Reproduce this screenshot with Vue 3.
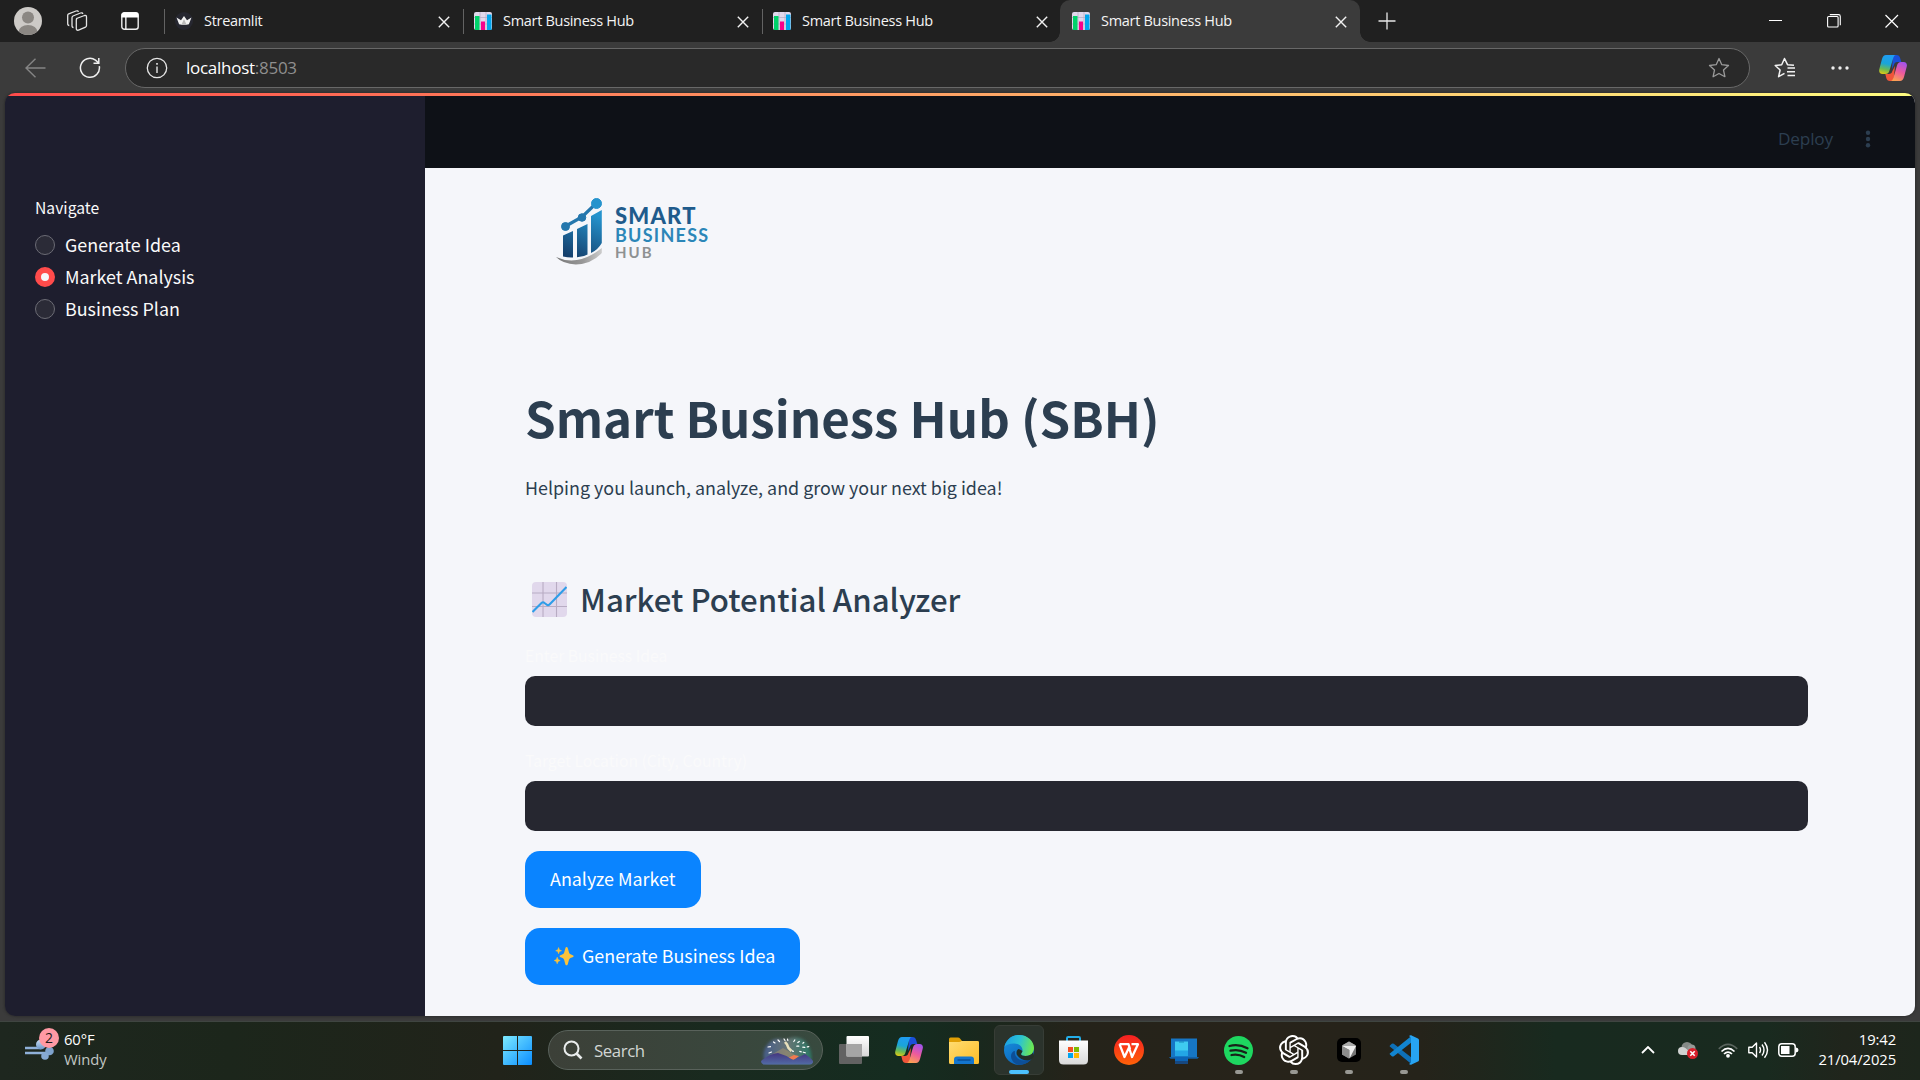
<script setup>
import { ref } from 'vue'

const tabs = [
  { title: 'Streamlit', icon: 'crown', active: false },
  { title: 'Smart Business Hub', icon: 'chart', active: false },
  { title: 'Smart Business Hub', icon: 'chart', active: false },
  { title: 'Smart Business Hub', icon: 'chart', active: true },
]
const pages = ['Generate Idea', 'Market Analysis', 'Business Plan']
const page = ref('Market Analysis')
const idea = ref('')
const place = ref('')
</script>

<template>
  <div class="screen">
    <svg class="defs" width="0" height="0" aria-hidden="true">
      <defs>
        <linearGradient id="cpA" x1="0.2" y1="0" x2="0" y2="1">
          <stop offset="0" stop-color="#1f9df0" /><stop offset=".4" stop-color="#1aa5d8" /><stop offset=".7" stop-color="#6cba52" /><stop offset="1" stop-color="#f3cb0a" />
        </linearGradient>
        <linearGradient id="cpB" x1=".7" y1="0" x2=".3" y2="1">
          <stop offset="0" stop-color="#a353ea" /><stop offset=".5" stop-color="#ee5a9c" /><stop offset="1" stop-color="#fba351" />
        </linearGradient>
        <symbol id="copilot" viewBox="0 0 28 26">
          <path d="M14 0h3.500c2 0 3 1 3.600 3l1.200 4h-4c-2 0-2.800 1-3.300 2.700L13 14z" fill="#1a4fd8" />
          <path d="M14.500 26h-3.600c-2 0-3-1-3.600-3l-1-4h3.500c2 0 3-1 3.500-2.700L16 11z" fill="#f0553a" />
          <path d="M7 0h10c-1.600.2-2.300 1.500-2.900 3.500l-3.700 12.200C9.700 18 8.600 19 6.300 19H3.500C.8 19-.3 17 .3 14.200L3 4C3.800 1.300 5 0 7 0z" fill="url(#cpA)" />
          <path d="M21 26H11.500c1.600-.2 2.400-1.500 3-3.500l3.500-12C18.700 8.200 19.800 7 22 7h2.700c2.600 0 3.700 2 3 4.800L25 22c-.8 2.800-2 4-4 4z" fill="url(#cpB)" />
        </symbol>
      </defs>
    </svg>

    <header class="tabstrip">
      <svg class="avatar" width="28" height="28" viewBox="0 0 28 28">
        <clipPath id="av"><circle cx="14" cy="14" r="14" /></clipPath>
        <g clip-path="url(#av)"><rect width="28" height="28" fill="#cdcac7" /><circle cx="14" cy="10.500" r="6" fill="#8b8783" /><ellipse cx="14" cy="25" rx="9.500" ry="7" fill="#8b8783" /></g>
      </svg>
      <svg class="spaces" width="22" height="22" viewBox="0 0 22 22" fill="none" stroke="#e4e4e4" stroke-width="1.300" stroke-linejoin="round">
        <path d="M10.500 8.500 18.500 5.500q2-.5 2 1.500v8.500q0 1.200-1 1.600l-7 3q-2.200.6-2.200-1.600V10q0-1 .7-1.500z" />
        <path d="M7.500 17.500q-1.500 0-1.500-1.700V7.700q0-1.200 1-1.700l7.500-3q2-.6 2.300 1" />
        <path d="M3.300 15.500q-1.600 0-1.600-1.700V5.500q0-1.200 1-1.600L10 1q2-.7 2.400.8" />
      </svg>
      <svg class="vert" width="18" height="18" viewBox="0 0 18 18"><rect x=".8" y=".8" width="16.400" height="16.400" rx="2.500" fill="none" stroke="#eee" stroke-width="1.400" /><path d="M.5 5.500V3Q.5.500 3 .5h12q2.500 0 2.500 2.500v2.500zM4.200 5h1.300v12H4.200z" fill="#fff" /></svg>
      <nav class="tabs">
        <div v-for="(t, i) in tabs" :key="i" class="tab" :class="{ active: t.active }">
          <svg v-if="t.icon === 'crown'" class="fav" width="18" height="18" viewBox="0 0 18 18"><circle cx="9" cy="9" r="9" fill="#262730" /><path d="M1.500 5.500 6 8.200 9 4l3 4.200 4.500-2.700-2.600 6.800q-4.900 1-9.800 0z" fill="#f2f2f2" /><path d="m9 7 2.500 5.500h-5z" fill="#bbb" /></svg>
          <svg v-else class="fav" width="18" height="18" viewBox="0 0 18 18"><rect width="18" height="18" rx="2" fill="#e1d8ec" /><path d="M0 5.500h18M0 12h18M6 0v18M12 0v18" stroke="#b9aec8" stroke-width=".8" /><path d="M1 4h4.500v14H1z" fill="#00d26a" /><path d="M7 9.500h4V18H7z" fill="#f8008c" /><path d="M13 2.500h4.500V18H13z" fill="#00a6ed" /></svg>
          <span class="tab-title">{{ t.title }}</span>
          <svg class="x" width="12" height="12" viewBox="0 0 12 12"><path d="m.8.8 10.400 10.400M11.200.8.8 11.200" stroke="#f2f2f2" stroke-width="1.400" /></svg>
        </div>
      </nav>
      <svg class="plus" width="18" height="18" viewBox="0 0 18 18"><path d="M9 .5v17M.5 9h17" stroke="#e8e8e8" stroke-width="1.300" /></svg>
      <div class="winctl">
        <svg width="14" height="14" viewBox="0 0 14 14"><path d="M0 6.500h13" stroke="#fff" /></svg>
        <svg width="14" height="14" viewBox="0 0 14 14" fill="none" stroke="#fff" stroke-width="1.100"><rect x=".6" y="2.500" width="10.500" height="10.500" rx="1" /><path d="M2.800.6h8.700q1.800 0 1.800 1.800v8.800" /></svg>
        <svg width="14" height="14" viewBox="0 0 14 14"><path d="m.5 1 12.500 12.500M13 1 .5 13.500" stroke="#fff" stroke-width="1.200" /></svg>
      </div>
    </header>

    <div class="toolbar">
      <svg class="back" width="21" height="20" viewBox="0 0 21 20" fill="none" stroke="#858585" stroke-width="1.400"><path d="M20.500 10H1M10.500.8 1 10l9.500 9.200" /></svg>
      <svg class="reload" width="22" height="22" viewBox="0 0 22 22" fill="none" stroke="#f0f0f0" stroke-width="1.500"><path d="M20.300 9.200A9.500 9.500 0 1 1 16.500 3.100l3 2.700M19.800 1v5.300h-5.300" /></svg>
      <div class="address">
        <svg width="22" height="22" viewBox="0 0 22 22"><circle cx="11" cy="11" r="9.700" fill="none" stroke="#e6e6e6" stroke-width="1.300" /><path d="M10.300 9.500h1.400v6.500h-1.400zM10.200 6h1.600v1.700h-1.600z" fill="#e6e6e6" /></svg>
        <span class="url">localhost<i>:8503</i></span>
        <svg class="star" width="22" height="22" viewBox="0 0 22 22"><path d="m11 1.500 2.800 6.200 6.700.8-5 4.500 1.400 6.700L11 16.500l-5.900 3.200L6.500 13l-5-4.500 6.700-.8z" fill="none" stroke="#9a9a9a" stroke-width="1.300" stroke-linejoin="round" /></svg>
      </div>
      <svg class="favs" width="22" height="22" viewBox="0 0 22 22" fill="none" stroke="#f2f2f2" stroke-width="1.500" stroke-linejoin="round"><path d="M20 8.200 13.500 7.700 10.500 1.500 7.700 7.700 1.200 8.500l4.900 4.500-1.500 6.700 5.900-3.400M13.500 11h7.500M13 14.700h8M13.500 18.500h7.500" /></svg>
      <svg class="dots" width="18" height="4" viewBox="0 0 18 4" fill="#eee"><circle cx="2" cy="2" r="1.700" /><circle cx="9" cy="2" r="1.700" /><circle cx="16" cy="2" r="1.700" /></svg>
      <svg class="cop" width="28" height="26"><use href="#copilot" /></svg>
    </div>

    <div class="frame">
      <div class="page">
        <div class="rainbow"></div>
        <div class="app">
          <aside class="side">
            <p class="nav-label">Navigate</p>
            <label v-for="p in pages" :key="p" class="radio" @click="page = p">
              <span class="dot" :class="{ on: page === p }"></span><span class="radio-text">{{ p }}</span>
            </label>
          </aside>
          <main class="main">
            <div class="appbar">
              <span class="deploy">Deploy</span>
              <svg width="6" height="18" viewBox="0 0 6 18" fill="#2c3e50"><circle cx="3" cy="2.700" r="2.200" /><circle cx="3" cy="9" r="2.200" /><circle cx="3" cy="15.300" r="2.200" /></svg>
            </div>
            <div class="content">
              <div class="logo">
                <svg width="48" height="70" viewBox="0 0 48 70">
                  <defs><linearGradient id="lg" x1=".6" y1="0" x2=".2" y2="1"><stop offset="0" stop-color="#2593cd" /><stop offset="1" stop-color="#143e6b" /></linearGradient>
                    <linearGradient id="gr"><stop offset="0" stop-color="#777" /><stop offset=".6" stop-color="#999" /><stop offset="1" stop-color="#ccc" /></linearGradient></defs>
                  <path d="M7 38.500 17 34v26.500q-5 .2-10-1zM21 32l10.500-5v30.500L28 59l-7 1.300zM35 19l10.800-6v33q-4 7-10.800 10z" fill="url(#lg)" />
                  <path d="M0 60q22 10 45.800-9v5q-10 11-26 11.500Q7 67 0 60z" fill="url(#gr)" />
                  <g fill="#2477ad" stroke="#2477ad"><path d="M9 29.500 26 20 40.500 6" fill="none" stroke-width="3.200" /><circle cx="9.500" cy="29.500" r="4" /><circle cx="26" cy="20.500" r="3.800" /><circle cx="40.500" cy="6.500" r="5" fill="#2593cd" stroke="#2593cd" /></g>
                </svg>
                <div class="wordmark"><b class="w1">SMART</b><b class="w2">BUSINESS</b><b class="w3">HUB</b></div>
              </div>
              <h1>Smart Business Hub (SBH)</h1>
              <p class="lead">Helping you launch, analyze, and grow your next big idea!</p>
              <h2>
                <svg width="35" height="35" viewBox="0 0 35 35"><rect width="35" height="35" rx="4" fill="#e1d8ec" /><path d="M11 0v35M24.500 0v35M0 11h35M0 24.500h35" stroke="#b8acc3" stroke-width="1.100" /><path d="m.5 30 9-9q1.500-1.500 3 0l2 1.500q1.500 1.500 3 0L34.500 5" fill="none" stroke="#2f9de8" stroke-width="2.100" /></svg>
                <span>Market Potential Analyzer</span>
              </h2>
              <label class="field-label">Enter Business Idea</label>
              <input v-model="idea" class="field" type="text" />
              <label class="field-label">Target Location (City, Country)</label>
              <input v-model="place" class="field" type="text" />
              <button class="btn">Analyze Market</button>
              <button class="btn">
                <svg width="20" height="19" viewBox="0 0 20 19" fill="#f9c23c"><path d="M12.500 0q1 0 1.300 1.200l1.300 4.500q.4 1.200 1.500 1.600l2.600 1.200q.8.700 0 1.400l-2.700 1.200q-1.100.5-1.500 1.700l-1.300 4.600q-1.200 1.800-2.300 0l-1.300-4.600q-.4-1.200-1.500-1.700L6 9.900q-.8-.7 0-1.400l2.600-1.200q1.100-.4 1.500-1.600l1.300-4.500Q11.700 0 12.500 0z" /><path d="m4.600.5.8 2.300L7.500 3.700l-2.100.9-.8 2.200-.8-2.200-2.100-.9 2.100-.9zM3.200 10.200l.9 2.400 2.100.9-2.100.9-.9 2.400-.9-2.400-2.100-.9 2.100-.9z" stroke="#f9c23c" stroke-width=".5" /></svg>
                <span>Generate Business Idea</span>
              </button>
            </div>
          </main>
        </div>
      </div>
    </div>

    <footer class="taskbar">
      <div class="weather">
        <div class="wicon">
          <svg width="30" height="24" viewBox="0 0 30 24"><defs><linearGradient id="wd" x1="0" y1="0" x2="0" y2="1"><stop offset="0" stop-color="#c9dcf2" /><stop offset="1" stop-color="#6b96c8" /></linearGradient></defs><path d="M0 10h16M0 15h26" fill="none" stroke="#8fb0d8" stroke-width="2.600" /><circle cx="16" cy="6.500" r="5" fill="url(#wd)" /><circle cx="24.500" cy="13" r="4.300" fill="#7fa3cd" /><circle cx="20" cy="18" r="3.800" fill="#86a9d2" /></svg>
          <span class="badge">2</span>
        </div>
        <div class="wtext"><span>60°F</span><span class="dim">Windy</span></div>
      </div>
      <div class="apps">
        <div class="cell">
          <svg width="29" height="29" viewBox="0 0 29 29"><defs><linearGradient id="win" x1="0" y1="0" x2="1" y2="1"><stop offset="0" stop-color="#7deaff" /><stop offset="1" stop-color="#0a8dff" /></linearGradient></defs><path d="M1 0h13v14H0V1q0-1 1-1zm14 0h13q1 0 1 1v13H15zM0 15h14v14H1q-1 0-1-1zm15 0h14v13q0 1-1 1H15z" fill="url(#win)" /></svg>
        </div>
        <div class="search">
          <svg width="20" height="20" viewBox="0 0 20 20" fill="none" stroke="#e9ecec"><circle cx="8.500" cy="8.500" r="7" stroke-width="2" /><path d="m13.500 13.500 5 5" stroke-width="2.600" /></svg>
          <span>Search</span>
          <svg class="hills" width="52" height="30" viewBox="0 0 52 30"><defs><linearGradient id="sky"><stop offset="0" stop-color="#4b65a5" /><stop offset=".5" stop-color="#778387" /><stop offset="1" stop-color="#268a74" /></linearGradient><linearGradient id="hill" x1="0" y1="0" x2="0" y2="1"><stop offset="0" stop-color="#443780" /><stop offset="1" stop-color="#526ba5" /></linearGradient><filter id="sf" x="-20%" y="-20%" width="140%" height="140%"><feGaussianBlur stdDeviation="1.500" /></filter></defs>
            <path d="M4 29Q0 16 7 9 13 1 24 5 35-1 44 6q8 8 6 23z" fill="url(#sky)" filter="url(#sf)" opacity=".75" />
            <path d="M10 20 22 13l12 7-6 5z" fill="#c9a26a" opacity=".35" /><path d="m27 23 6-3 5 1-5 4z" fill="#f07a50" />
            <path d="M0 26Q8 19 17 18q8 2 15 7l12-6q6 4 8 7v1.500Q51 29.500 49 29.500H4q-4 0-4-3.500z" fill="url(#hill)" />
            <path d="m23 4 1 1.500m-7-.5 1.500 1.500m-6 .500 1.500 1m-7 4 2.500-.3M8 18l2.500-1m16-13 .3 1.500m7-.5-1 1.500m5.500 0-1.500 1m6 0-1 .7m-6 3h2m4 1 2 .2m-5 4 1.500.5m-9-1 1 .5m10 .8 2 .6m2-6 1.500-.2" stroke="#fff" stroke-width="1.200" stroke-linecap="round" /><path d="m24 7 2 2.500 1.500 3.500 3 3" stroke="#fff3c8" stroke-width="2.500" fill="none" opacity=".85" />
          </svg>
        </div>
        <div class="cell"><svg width="30" height="28" viewBox="0 0 30 28"><defs><linearGradient id="tv" x1="0" y1="0" x2="0" y2="1"><stop offset="0" stop-color="#fff" /><stop offset="1" stop-color="#d7d7d7" /></linearGradient></defs><rect x="0" y="8" width="23" height="20" rx="1" fill="#626262" /><rect x="7.500" y="0" width="22.500" height="20.500" rx="1" fill="url(#tv)" /><path d="M7.500 8H23v12.500H7.500z" fill="#a5a5a5" /></svg></div>
        <div class="cell"><svg width="28" height="26"><use href="#copilot" /></svg></div>
        <div class="cell"><svg width="30" height="27" viewBox="0 0 30 27"><defs><linearGradient id="fd" x1="0" y1="0" x2="1" y2="1"><stop offset="0" stop-color="#ffdc72" /><stop offset="1" stop-color="#fdbd27" /></linearGradient></defs><path d="M0 2q0-1.500 1.500-1.500H9q1.300 0 2 1L13 4h15.500Q30 4 30 5.500V12H0z" fill="#e09f05" /><path d="M0 5h10q1.500 0 2.500-1H28.500Q30 4 30 5.500V25.500Q30 27 28.500 27h-27Q0 27 0 25.500z" fill="url(#fd)" /><path d="M5 27v-4.500q0-3 3-3h14q3 0 3 3V27z" fill="#1376cf" /><path d="M8.500 23h13" stroke="#0a4c92" stroke-width="1.400" /></svg></div>
        <div class="cell"><div class="tile"><svg width="30" height="30" viewBox="0 0 30 30"><defs><linearGradient id="e1" x1="0" y1=".3" x2="1" y2=".5"><stop offset="0" stop-color="#1c9fe6" /><stop offset=".5" stop-color="#2bc3d3" /><stop offset="1" stop-color="#6fea4c" /></linearGradient><linearGradient id="e2" x1="0" y1="0" x2=".6" y2="1"><stop offset="0" stop-color="#1a93e0" /><stop offset="1" stop-color="#0a63bb" /></linearGradient></defs><circle cx="15" cy="15" r="15" fill="url(#e2)" /><path d="M11 16c-1 5 3 9.500 9 9.500 4 0 6-1.500 8-2.200C25 28 20 30 15 30c-5-1-8-5-8-9 0-3 2-5 4-5z" fill="#0d4f97" /><path d="M.3 12C2 4.500 8 0 15 0c9 0 15 6.500 15 13 0 5-3.500 8-8.500 8-3 0-4.500-1-4.500-2s1.500-1.700 1.500-4C18.500 11.500 15 8.500 10 8.500 5.500 8.500 2 10 .3 12z" fill="url(#e1)" /><path d="M17 19c0 1 1.500 2 4.500 2 3.500 0 6-1.500 7.500-3.500l1 4-2 2.200C24 26.500 16.500 25.500 13 20c-1-2-.5-5 1.500-6 2 .5 4 2 4 2q-.5 1.500-1.500 3z" fill="#233027" /></svg></div><i class="bar wide"></i></div>
        <div class="cell"><svg width="29" height="30" viewBox="0 0 29 30"><defs><linearGradient id="st" x1="0" y1="0" x2="0" y2="1"><stop offset="0" stop-color="#fff" /><stop offset="1" stop-color="#d9d9d9" /></linearGradient></defs><path d="M8 6V3.200Q8 2 9.200 2h10.600Q21 2 21 3.200V6" fill="none" stroke="#24aee9" stroke-width="2" /><path d="M0 5.500h29V25q0 4.500-4.500 4.500h-20Q0 29.500 0 25z" fill="url(#st)" /><path d="M9 12h5v5H9z" fill="#f25022" /><path d="M15 12h5v5h-5z" fill="#7fba00" /><path d="M9 18h5v5H9z" fill="#00a4ef" /><path d="M15 18h5v5h-5z" fill="#ffb900" /></svg></div>
        <div class="cell"><svg width="30" height="30" viewBox="0 0 30 30"><defs><linearGradient id="wp" x1="0" y1="0" x2="0" y2="1"><stop offset="0" stop-color="#f51f22" /><stop offset="1" stop-color="#ff6208" /></linearGradient></defs><circle cx="15" cy="15" r="15" fill="url(#wp)" /><path d="M5.500 9.200h9l1.500 5M5.500 9.200 10.500 22 15 12.500 18 22 24 9.200h-6.500" fill="none" stroke="#fff" stroke-width="2.300" stroke-linejoin="round" /></svg></div>
        <div class="cell"><svg width="30" height="27" viewBox="0 0 30 27"><path d="M2 1.500h26V20H2z" fill="#1676c5" /><path d="M0 20h30l-1.500 1.700h-27z" fill="#1261a8" /><path d="M6 4.500h13v13H6z" fill="#3ecbf0" /><path d="M10 5h5" stroke="#1687ba" /><path d="M6 13.500h13v6H6z" fill="#23a6e6" /><path d="M6 19.500h13V24H6z" fill="#0c65b8" /><path d="M6 24h13v3H6z" fill="#174880" /></svg></div>
        <div class="cell"><svg width="29" height="29" viewBox="0 0 29 29"><circle cx="14.500" cy="14.500" r="14.500" fill="#1ed760" /><path d="M5.500 10q9-2.500 18 2.200M6.500 14.700q8-2 15.500 2M7.500 19q6.500-1.500 12.700 2" stroke="#182119" stroke-width="2.300" fill="none" stroke-linecap="round" /></svg><i class="bar"></i></div>
        <div class="cell"><svg width="30" height="30" viewBox="0 0 24 24" fill="#fff"><path d="M22.2819 9.8211a5.9847 5.9847 0 0 0-.5157-4.9108 6.0462 6.0462 0 0 0-6.5098-2.9A6.0651 6.0651 0 0 0 4.9807 4.1818a5.9847 5.9847 0 0 0-3.9977 2.9 6.0462 6.0462 0 0 0 .7427 7.0966 5.98 5.98 0 0 0 .511 4.9107 6.051 6.051 0 0 0 6.5146 2.9001A5.9847 5.9847 0 0 0 13.2599 24a6.0557 6.0557 0 0 0 5.7718-4.2058 5.9894 5.9894 0 0 0 3.9977-2.9001 6.0557 6.0557 0 0 0-.7475-7.0729zm-9.022 12.6081a4.4755 4.4755 0 0 1-2.8764-1.0408l.1419-.0804 4.7783-2.7582a.7948.7948 0 0 0 .3927-.6813v-6.7369l2.02 1.1686a.071.071 0 0 1 .038.052v5.5826a4.504 4.504 0 0 1-4.4945 4.4944zm-9.6607-4.1254a4.4708 4.4708 0 0 1-.5346-3.0137l.142.0852 4.783 2.7582a.7712.7712 0 0 0 .7806 0l5.8428-3.3685v2.3324a.0804.0804 0 0 1-.0332.0615L9.74 19.9502a4.4992 4.4992 0 0 1-6.1408-1.6464zM2.3408 7.8956a4.485 4.485 0 0 1 2.3655-1.9728V11.6a.7664.7664 0 0 0 .3879.6765l5.8144 3.3543-2.0201 1.1685a.0757.0757 0 0 1-.071 0l-4.8303-2.7865A4.504 4.504 0 0 1 2.3408 7.872zm16.5963 3.8558L13.1038 8.364 15.1192 7.2a.0757.0757 0 0 1 .071 0l4.8303 2.7913a4.4944 4.4944 0 0 1-.6765 8.1042v-5.6772a.79.79 0 0 0-.407-.667zm2.0107-3.0231l-.142-.0852-4.7735-2.7818a.7759.7759 0 0 0-.7854 0L9.409 9.2297V6.8974a.0662.0662 0 0 1 .0284-.0615l4.8303-2.7866a4.4992 4.4992 0 0 1 6.6802 4.66zM8.3065 12.863l-2.02-1.1638a.0804.0804 0 0 1-.038-.0567V6.0742a4.4992 4.4992 0 0 1 7.3757-3.4537l-.142.0805L8.704 5.459a.7948.7948 0 0 0-.3927.6813zm1.0976-2.3654l2.602-1.4998 2.6069 1.4998v2.9994l-2.5974 1.4997-2.6067-1.4997Z" /></svg><i class="bar"></i></div>
        <div class="cell"><svg width="24" height="24" viewBox="0 0 24 24"><rect width="24" height="24" rx="5" fill="#000" /><path d="m12 3.500 7 4v9l-7 4-7-4v-9z" fill="#777" /><path d="m5 7.500 7-4 7 4-7 2z" fill="#aaa" /><path d="M5 8h14l-6.500 12.500V12z" fill="#eee" /><path d="m5 8 7 4v8.500l-7-4z" fill="#8c8c8c" /></svg><i class="bar"></i></div>
        <div class="cell"><svg width="30" height="30" viewBox="0 0 30 30"><path d="m1 10.500 1.800-1.700q1-.7 2 0L23 23v6.500L.8 11.500q-.5-.5.2-1z" fill="#0e70b8" /><path d="m1 19.500 1.800 1.700q1 .7 2 0L23 7V.5L.8 18.500q-.5.500.2 1z" fill="#1285d0" /><path d="M22 .2 29 3.500q1 .5 1 1.600v19.800q0 1.100-1 1.600l-7 3.300q-1 .2-2-.8l2-1.500v-25L20 1q1-1 2-.8z" fill="#27a4f3" /></svg><i class="bar"></i></div>
      </div>
      <div class="tray">
        <svg class="chev" width="14" height="8" viewBox="0 0 14 8"><path d="m1 7 6-6 6 6" fill="none" stroke="#fff" stroke-width="1.800" /></svg>
        <svg class="cloud" width="20" height="17" viewBox="0 0 20 17"><circle cx="9" cy="5.500" r="5.500" fill="#858a87" /><circle cx="13.500" cy="6.500" r="4" fill="#959a97" /><path d="M4 13a4 4 0 0 1 0-8q4 0 7 5l-1 3z" fill="#d0d2d1" /><circle cx="14.500" cy="11.500" r="5.500" fill="#d8202b" /><path d="m12.300 9.300 4.400 4.400m0-4.400-4.400 4.400" stroke="#fff" stroke-width="1.600" /></svg>
        <svg class="wifi" width="20" height="15" viewBox="0 0 20 15" fill="none" stroke-width="1.700"><path d="M.8 5.800q9.200-9 18.400 0" stroke="#5b655f" /><path d="M3.500 8.500q6.500-6.300 13 0M6 11q4-4 8 0" stroke="#fff" /><circle cx="10" cy="12.800" r="1.900" fill="#fff" /></svg>
        <svg class="vol" width="21" height="18" viewBox="0 0 21 18" fill="none" stroke="#fff" stroke-width="1.400"><path d="M.8 6.300h3.400L8.500 2v14l-4.300-4.300H.8zM11.500 6q2 3 0 6M14 3.500q4 5.500 0 11M16.500 1.200q6 7.800 0 15.600" stroke-linejoin="round" /></svg>
        <svg class="bat" width="21" height="14" viewBox="0 0 21 14"><rect x=".8" y=".8" width="16.400" height="12.400" rx="3" fill="none" stroke="#fff" stroke-width="1.500" /><path d="M3 3h8.500v8H3zM18 4.500q2.500.3 2.500 2.500T18 9.500z" fill="#fff" /></svg>
        <div class="clock"><span>19:42</span><span>21/04/2025</span></div>
      </div>
    </footer>
  </div>
</template>

<style>
body { margin: 0; overflow: hidden; background: #3b3b3b; }
</style>

<style scoped>
* { box-sizing: border-box; }
svg { display: block; flex: none; }
.defs { position: absolute; }
.screen { width: 1920px; height: 1080px; display: flex; flex-direction: column; overflow: hidden; background: #3b3b3b; font-family: "Open Sans", "Noto Sans", sans-serif; }

.tabstrip { height: 42px; flex: none; display: flex; align-items: center; background: #202020; }
.avatar { margin-left: 14px; }
.spaces { margin-left: 24px; }
.vert { margin-left: 33px; }
.tabs { display: flex; margin-left: 25px; height: 42px; }
.tab { width: 299px; display: flex; align-items: center; padding-left: 10px; position: relative; }
.tab:not(.active)::before { content: ""; position: absolute; left: 0; top: 9px; width: 1px; height: 25px; background: #636363; }
.tab.active { width: 300px; margin-left: -1px; padding-left: 12px; background: #3b3b3b; border-radius: 10px 10px 0 0; }
.tab.active::before, .tab.active::after { content: ""; position: absolute; bottom: 0; width: 10px; height: 10px; }
.tab.active::before { left: -10px; background: radial-gradient(circle at 0 0, #202020 9.500px, #3b3b3b 10px); }
.tab.active::after { right: -10px; background: radial-gradient(circle at 100% 0, #202020 9.500px, #3b3b3b 10px); }
.tab-title { margin-left: 12px; flex: 1; font-size: 14.500px; letter-spacing: -0.300px; line-height: 20px; color: #f4f4f4; white-space: nowrap; }
.tab .tab-title { margin-left: 11px; }
.tab:not(.active) .fav { margin-left: 1px; }
.x { margin: 1px 13px 0 0; }
.plus { margin-left: 18px; }
.winctl { display: flex; gap: 44px; margin-left: auto; margin-right: 21px; }

.toolbar { height: 51px; flex: none; display: flex; align-items: center; }
.back { margin-left: 25px; }
.reload { margin-left: 33px; }
.address { width: 1625px; height: 40px; margin-left: 24px; border: 1px solid #686868; border-radius: 20px; background: #292929; display: flex; align-items: center; padding: 0 19px 0 20px; }
.url { margin-left: 18px; font-size: 17px; letter-spacing: -0.270px; color: #fff; }
.url i { font-style: normal; color: #8f8f8f; }
.star { margin-left: auto; }
.favs { margin-left: 24px; }
.dots { margin-left: 35px; }
.cop { margin-left: 30px; }

.frame { height: 928px; flex: none; padding: 0 5px 5px; }
.page { height: 923px; border-radius: 10px; overflow: hidden; display: flex; flex-direction: column; box-shadow: 0 0 3px #222; }
.rainbow { height: 3px; flex: none; background: linear-gradient(90deg, #ff4b4b, #fffd80); }
.app { flex: 1; display: flex; font-family: "Noto Sans CJK SC", sans-serif; }
.side { width: 420px; background: #1e1e2e; color: #fafafa; padding: 99px 30px 0; }
.nav-label { margin: 0 0 8px; font-size: 15.700px; line-height: 26px; }
.radio { display: flex; align-items: center; height: 32px; font-size: 17.900px; line-height: 30px; }
.radio-text { padding-bottom: 2px; }
.dot { width: 20px; height: 20px; border-radius: 50%; background: #2b2b37; border: 1px solid #6c6c75; margin-right: 10px; }
.dot.on { border: 6px solid #ff4b4b; background: #f5f6fa; }
.main { flex: 1; background: #f5f6fa; }
.appbar { height: 72px; background: #0e1117; display: flex; align-items: center; justify-content: flex-end; padding: 13px 44px 0 0; gap: 32px; }
.deploy { color: #2c3e50; font-family: "Open Sans", sans-serif; font-weight: 400; font-size: 17.200px; letter-spacing: -0.150px; line-height: 24px; }
.content { padding: 29px 107px 0 100px; display: flex; flex-direction: column; align-items: flex-start; }
.logo { display: flex; margin-left: 31px; height: 72px; }
.wordmark { display: flex; flex-direction: column; margin-left: 11px; padding-top: 9px; font-family: Lato, sans-serif; }
.w1, .w2, .w3 { display: block; white-space: nowrap; }
.w1 { font-size: 22px; line-height: 20px; color: #1f5b8c; letter-spacing: 1.200px; font-weight: 900; }
.w2 { font-size: 18px; line-height: 18px; color: #2b86b8; letter-spacing: 1.250px; }
.w3 { font-size: 15px; line-height: 16px; color: #8e9192; letter-spacing: 2px; }
h1 { margin: 115px 0 0; font-size: 49.200px; line-height: 66px; font-weight: 700; color: #2c3e50; white-space: nowrap; }
.lead { margin: 21px 0 0; font-size: 17.900px; line-height: 32px; color: #2c3e50; white-space: nowrap; }
h2 { margin: 75px 0 0; padding-left: 7px; height: 42px; display: flex; align-items: center; font-size: 31.200px; line-height: 42px; font-weight: 500; color: #2c3e50; white-space: nowrap; }
h2 span { margin-left: 13px; }
.field-label { display: block; margin-top: 22px; height: 33px; font-size: 15.700px; line-height: 26px; color: #fafafa; white-space: nowrap; }
h2 + .field-label { margin-top: 23px; }
.field { width: 1283px; height: 50px; border: 0; border-radius: 10px; background: #262730; color: #fafafa; padding: 0 15px; outline: none; }
.btn { height: 57px; margin-top: 20px; border: 0; border-radius: 15px; background: #0a84ff; color: #fff; font-family: inherit; font-size: 17.900px; line-height: 30px; padding: 0 25px 3px; display: flex; align-items: center; white-space: nowrap; }
.btn svg { margin: 3px 8px 0 4px; }

.taskbar { flex: 1; min-height: 0; display: flex; align-items: center; padding-bottom: 2px; border-top: 1px solid #3f4541; color: #fff; background: linear-gradient(90deg, #1e271f 0, #1c261b 12%, #21231a 26%, #192a1f 37%, #152c20 47%, #17291e 50%, #25231a 56%, #27231a 66%, #25231a 74%, #182a1f 81%, #192a1f 92%, #20251c 96%, #1d261c 100%); }
.weather { width: 490px; display: flex; align-items: center; padding-left: 25px; margin-top: -5px; }
.wicon { position: relative; width: 30px; height: 24px; margin-top: 5px; }
.badge { position: absolute; left: 14px; top: -10px; width: 20px; height: 20px; border-radius: 50%; background: #ff99a4; color: #1a1a1a; font-size: 14px; line-height: 20px; text-align: center; }
.wtext { display: flex; flex-direction: column; margin-left: 9px; font-size: 14.800px; line-height: 20px; letter-spacing: -0.100px; padding-top: 3px; }
.dim { color: #c3c7c4; }
.apps { display: flex; align-items: center; height: 58px; }
.cell { width: 55px; height: 58px; display: flex; align-items: center; justify-content: center; position: relative; }
.search { width: 275px; height: 40px; margin: 0 3px; border-radius: 20px; border: 1px solid #59625b; background: linear-gradient(90deg, #3c4038, #384a3f); display: flex; align-items: center; padding: 0 9px 0 14px; }
.search span { margin-left: 11px; font-size: 16.800px; color: #d2d6d3; letter-spacing: -0.400px; }
.hills { margin-left: auto; }
.tile { width: 50px; height: 50px; border-radius: 6px; background: #2b332c; border: 1px solid #373d36; display: flex; align-items: center; justify-content: center; }
.bar { position: absolute; bottom: 5px; width: 8px; height: 4px; border-radius: 2px; background: #989893; }
.bar.wide { width: 20px; background: #4cc2ff; }
.tray { margin-left: auto; display: flex; align-items: center; }
.cloud { margin-left: 23px; }
.wifi { margin-left: 20px; }
.vol { margin-left: 10px; }
.bat { margin-left: 9px; }
.clock { width: 97px; margin-right: 24px; padding-bottom: 2px; display: flex; flex-direction: column; align-items: flex-end; font-size: 14.800px; line-height: 20px; letter-spacing: -0.100px; }
</style>
